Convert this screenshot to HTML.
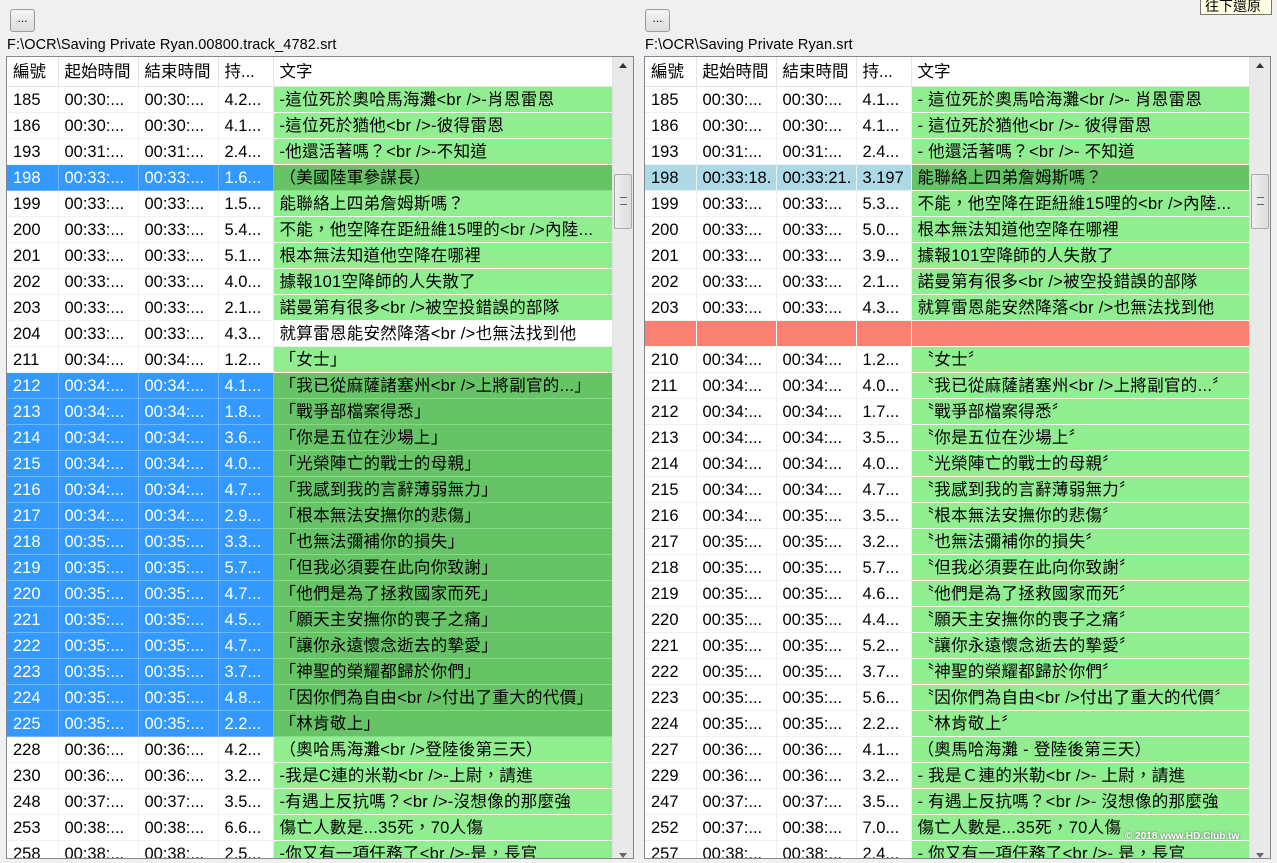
<!DOCTYPE html>
<html><head><meta charset="utf-8"><style>
*{margin:0;padding:0;box-sizing:border-box}
body{width:1277px;height:863px;background:#f0f0f0;font-family:"Liberation Sans","Noto Sans CJK TC",sans-serif;overflow:hidden;position:relative;color:#000}
.btn{position:absolute;top:9px;width:25px;height:23px;border:1px solid #9a9a9a;border-radius:3px;background:linear-gradient(#f6f6f6,#dcdcdc);font-size:12px;text-align:center;line-height:17px}
.lbl{position:absolute;top:37px;font-size:14.5px;letter-spacing:0.1px}
.panel{position:absolute;top:56px;height:803px;border:1px solid #828790;background:#fff;overflow:hidden}
table{border-collapse:collapse;table-layout:fixed;font-size:16.5px;position:absolute;left:0;top:0}
td,th{height:26px;border-right:1px solid #f0f0f0;border-bottom:1px solid #f0f0f0;padding:2px 0 0 6px;white-space:nowrap;overflow:hidden;font-weight:normal;text-align:left;line-height:23px}
th{height:29px;background:#fff;border-right:1px solid #e5e5e5;border-bottom:1px solid #e5e5e5;padding-left:6px;padding-top:3px}
td.t{background:#90ee90;border-right:1px solid #fff;border-bottom:1px solid #fff;letter-spacing:0.3px}
tr.s td{background:#3399ff;color:#fff;border-color:#6fb6ff}
tr.s td.t{background:#66c466;color:#000;border-color:#8ad88a}
tr.lb td{background:#add8e6}
tr.lb td.t{background:#66c466}
tr.w td.t{background:#fff;border-color:#f0f0f0}
tr.r td{background:#fa8072;border-color:#fff}
.sb{position:absolute;right:0;top:0;width:21px;height:100%;background:#e9e9e9;border-left:1px solid #e0e0e0}
.sb .up{position:absolute;top:6px;left:6px;width:0;height:0;border-left:4px solid transparent;border-right:4px solid transparent;border-bottom:5px solid #333}
.sb .dn{position:absolute;bottom:0;left:6px;width:0;height:0;border-left:4px solid transparent;border-right:4px solid transparent;border-top:5px solid #666}
.sb .th{position:absolute;top:117px;left:1px;width:18px;height:55px;border:1px solid #aaa;border-radius:2px;background:linear-gradient(90deg,#eee,#ddd)}
.sb .th:after{content:"";position:absolute;left:5px;top:22px;width:7px;height:6px;border-top:1px solid #666;border-bottom:1px solid #666}
.tip{position:absolute;left:1200px;top:-2px;width:72px;height:17px;background:#ffffe1;border:1px solid #767676;font-size:14px;line-height:14px;padding-left:4px}
.wm{position:absolute;left:1125px;top:831px;font-size:10px;color:#fff;text-shadow:0 0 2px #555;font-weight:bold}
</style></head><body>
<div class="btn" style="left:10px">...</div>
<div class="btn" style="left:645px">...</div>
<div class="lbl" style="left:7px">F:\OCR\Saving Private Ryan.00800.track_4782.srt</div>
<div class="lbl" style="left:645px">F:\OCR\Saving Private Ryan.srt</div>
<div class="tip">往下還原</div>

<div class="panel" style="left:6px;width:628px">
<table style="width:605px">
<colgroup><col style="width:51px"><col style="width:80px"><col style="width:80px"><col style="width:55px"><col style="width:339px"></colgroup>
<tr><th>編號</th><th>起始時間</th><th>結束時間</th><th>持...</th><th>文字</th></tr>
<tr><td>185</td><td>00:30:...</td><td>00:30:...</td><td>4.2...</td><td class="t">-這位死於奧哈馬海灘&lt;br /&gt;-肖恩雷恩</td></tr>
<tr><td>186</td><td>00:30:...</td><td>00:30:...</td><td>4.1...</td><td class="t">-這位死於猶他&lt;br /&gt;-彼得雷恩</td></tr>
<tr><td>193</td><td>00:31:...</td><td>00:31:...</td><td>2.4...</td><td class="t">-他還活著嗎？&lt;br /&gt;-不知道</td></tr>
<tr class="s"><td>198</td><td>00:33:...</td><td>00:33:...</td><td>1.6...</td><td class="t">（美國陸軍參謀長）</td></tr>
<tr><td>199</td><td>00:33:...</td><td>00:33:...</td><td>1.5...</td><td class="t">能聯絡上四弟詹姆斯嗎？</td></tr>
<tr><td>200</td><td>00:33:...</td><td>00:33:...</td><td>5.4...</td><td class="t">不能，他空降在距紐維15哩的&lt;br /&gt;內陸...</td></tr>
<tr><td>201</td><td>00:33:...</td><td>00:33:...</td><td>5.1...</td><td class="t">根本無法知道他空降在哪裡</td></tr>
<tr><td>202</td><td>00:33:...</td><td>00:33:...</td><td>4.0...</td><td class="t">據報101空降師的人失散了</td></tr>
<tr><td>203</td><td>00:33:...</td><td>00:33:...</td><td>2.1...</td><td class="t">諾曼第有很多&lt;br /&gt;被空投錯誤的部隊</td></tr>
<tr class="w"><td>204</td><td>00:33:...</td><td>00:33:...</td><td>4.3...</td><td class="t">就算雷恩能安然降落&lt;br /&gt;也無法找到他</td></tr>
<tr><td>211</td><td>00:34:...</td><td>00:34:...</td><td>1.2...</td><td class="t">「女士」</td></tr>
<tr class="s"><td>212</td><td>00:34:...</td><td>00:34:...</td><td>4.1...</td><td class="t">「我已從麻薩諸塞州&lt;br /&gt;上將副官的...」</td></tr>
<tr class="s"><td>213</td><td>00:34:...</td><td>00:34:...</td><td>1.8...</td><td class="t">「戰爭部檔案得悉」</td></tr>
<tr class="s"><td>214</td><td>00:34:...</td><td>00:34:...</td><td>3.6...</td><td class="t">「你是五位在沙場上」</td></tr>
<tr class="s"><td>215</td><td>00:34:...</td><td>00:34:...</td><td>4.0...</td><td class="t">「光榮陣亡的戰士的母親」</td></tr>
<tr class="s"><td>216</td><td>00:34:...</td><td>00:34:...</td><td>4.7...</td><td class="t">「我感到我的言辭薄弱無力」</td></tr>
<tr class="s"><td>217</td><td>00:34:...</td><td>00:34:...</td><td>2.9...</td><td class="t">「根本無法安撫你的悲傷」</td></tr>
<tr class="s"><td>218</td><td>00:35:...</td><td>00:35:...</td><td>3.3...</td><td class="t">「也無法彌補你的損失」</td></tr>
<tr class="s"><td>219</td><td>00:35:...</td><td>00:35:...</td><td>5.7...</td><td class="t">「但我必須要在此向你致謝」</td></tr>
<tr class="s"><td>220</td><td>00:35:...</td><td>00:35:...</td><td>4.7...</td><td class="t">「他們是為了拯救國家而死」</td></tr>
<tr class="s"><td>221</td><td>00:35:...</td><td>00:35:...</td><td>4.5...</td><td class="t">「願天主安撫你的喪子之痛」</td></tr>
<tr class="s"><td>222</td><td>00:35:...</td><td>00:35:...</td><td>4.7...</td><td class="t">「讓你永遠懷念逝去的摯愛」</td></tr>
<tr class="s"><td>223</td><td>00:35:...</td><td>00:35:...</td><td>3.7...</td><td class="t">「神聖的榮耀都歸於你們」</td></tr>
<tr class="s"><td>224</td><td>00:35:...</td><td>00:35:...</td><td>4.8...</td><td class="t">「因你們為自由&lt;br /&gt;付出了重大的代價」</td></tr>
<tr class="s"><td>225</td><td>00:35:...</td><td>00:35:...</td><td>2.2...</td><td class="t">「林肯敬上」</td></tr>
<tr><td>228</td><td>00:36:...</td><td>00:36:...</td><td>4.2...</td><td class="t">（奧哈馬海灘&lt;br /&gt;登陸後第三天）</td></tr>
<tr><td>230</td><td>00:36:...</td><td>00:36:...</td><td>3.2...</td><td class="t">-我是C連的米勒&lt;br /&gt;-上尉，請進</td></tr>
<tr><td>248</td><td>00:37:...</td><td>00:37:...</td><td>3.5...</td><td class="t">-有遇上反抗嗎？&lt;br /&gt;-沒想像的那麼強</td></tr>
<tr><td>253</td><td>00:38:...</td><td>00:38:...</td><td>6.6...</td><td class="t">傷亡人數是...35死，70人傷</td></tr>
<tr><td>258</td><td>00:38:...</td><td>00:38:...</td><td>2.5...</td><td class="t">-你又有一項任務了&lt;br /&gt;-是，長官</td></tr>
</table>
<div class="sb"><div class="up"></div><div class="th"></div><div class="dn"></div></div>
</div>

<div class="panel" style="left:644px;width:627px">
<table style="width:605px">
<colgroup><col style="width:51px"><col style="width:80px"><col style="width:80px"><col style="width:55px"><col style="width:339px"></colgroup>
<tr><th>編號</th><th>起始時間</th><th>結束時間</th><th>持...</th><th>文字</th></tr>
<tr><td>185</td><td>00:30:...</td><td>00:30:...</td><td>4.1...</td><td class="t">- 這位死於奧馬哈海灘&lt;br /&gt;- 肖恩雷恩</td></tr>
<tr><td>186</td><td>00:30:...</td><td>00:30:...</td><td>4.1...</td><td class="t">- 這位死於猶他&lt;br /&gt;- 彼得雷恩</td></tr>
<tr><td>193</td><td>00:31:...</td><td>00:31:...</td><td>2.4...</td><td class="t">- 他還活著嗎？&lt;br /&gt;- 不知道</td></tr>
<tr class="lb"><td>198</td><td>00:33:18.</td><td>00:33:21.</td><td>3.197</td><td class="t">能聯絡上四弟詹姆斯嗎？</td></tr>
<tr><td>199</td><td>00:33:...</td><td>00:33:...</td><td>5.3...</td><td class="t">不能，他空降在距紐維15哩的&lt;br /&gt;內陸...</td></tr>
<tr><td>200</td><td>00:33:...</td><td>00:33:...</td><td>5.0...</td><td class="t">根本無法知道他空降在哪裡</td></tr>
<tr><td>201</td><td>00:33:...</td><td>00:33:...</td><td>3.9...</td><td class="t">據報101空降師的人失散了</td></tr>
<tr><td>202</td><td>00:33:...</td><td>00:33:...</td><td>2.1...</td><td class="t">諾曼第有很多&lt;br /&gt;被空投錯誤的部隊</td></tr>
<tr><td>203</td><td>00:33:...</td><td>00:33:...</td><td>4.3...</td><td class="t">就算雷恩能安然降落&lt;br /&gt;也無法找到他</td></tr>
<tr class="r"><td></td><td></td><td></td><td></td><td class="t" style="background:#fa8072"></td></tr>
<tr><td>210</td><td>00:34:...</td><td>00:34:...</td><td>1.2...</td><td class="t">〝女士〞</td></tr>
<tr><td>211</td><td>00:34:...</td><td>00:34:...</td><td>4.0...</td><td class="t">〝我已從麻薩諸塞州&lt;br /&gt;上將副官的...〞</td></tr>
<tr><td>212</td><td>00:34:...</td><td>00:34:...</td><td>1.7...</td><td class="t">〝戰爭部檔案得悉〞</td></tr>
<tr><td>213</td><td>00:34:...</td><td>00:34:...</td><td>3.5...</td><td class="t">〝你是五位在沙場上〞</td></tr>
<tr><td>214</td><td>00:34:...</td><td>00:34:...</td><td>4.0...</td><td class="t">〝光榮陣亡的戰士的母親〞</td></tr>
<tr><td>215</td><td>00:34:...</td><td>00:34:...</td><td>4.7...</td><td class="t">〝我感到我的言辭薄弱無力〞</td></tr>
<tr><td>216</td><td>00:34:...</td><td>00:35:...</td><td>3.5...</td><td class="t">〝根本無法安撫你的悲傷〞</td></tr>
<tr><td>217</td><td>00:35:...</td><td>00:35:...</td><td>3.2...</td><td class="t">〝也無法彌補你的損失〞</td></tr>
<tr><td>218</td><td>00:35:...</td><td>00:35:...</td><td>5.7...</td><td class="t">〝但我必須要在此向你致謝〞</td></tr>
<tr><td>219</td><td>00:35:...</td><td>00:35:...</td><td>4.6...</td><td class="t">〝他們是為了拯救國家而死〞</td></tr>
<tr><td>220</td><td>00:35:...</td><td>00:35:...</td><td>4.4...</td><td class="t">〝願天主安撫你的喪子之痛〞</td></tr>
<tr><td>221</td><td>00:35:...</td><td>00:35:...</td><td>5.2...</td><td class="t">〝讓你永遠懷念逝去的摯愛〞</td></tr>
<tr><td>222</td><td>00:35:...</td><td>00:35:...</td><td>3.7...</td><td class="t">〝神聖的榮耀都歸於你們〞</td></tr>
<tr><td>223</td><td>00:35:...</td><td>00:35:...</td><td>5.6...</td><td class="t">〝因你們為自由&lt;br /&gt;付出了重大的代價〞</td></tr>
<tr><td>224</td><td>00:35:...</td><td>00:35:...</td><td>2.2...</td><td class="t">〝林肯敬上〞</td></tr>
<tr><td>227</td><td>00:36:...</td><td>00:36:...</td><td>4.1...</td><td class="t">（奧馬哈海灘 - 登陸後第三天）</td></tr>
<tr><td>229</td><td>00:36:...</td><td>00:36:...</td><td>3.2...</td><td class="t">- 我是Ｃ連的米勒&lt;br /&gt;- 上尉，請進</td></tr>
<tr><td>247</td><td>00:37:...</td><td>00:37:...</td><td>3.5...</td><td class="t">- 有遇上反抗嗎？&lt;br /&gt;- 沒想像的那麼強</td></tr>
<tr><td>252</td><td>00:37:...</td><td>00:38:...</td><td>7.0...</td><td class="t">傷亡人數是...35死，70人傷</td></tr>
<tr><td>257</td><td>00:38:...</td><td>00:38:...</td><td>2.4...</td><td class="t">- 你又有一項任務了&lt;br /&gt;- 是，長官</td></tr>
</table>
<div class="sb"><div class="up"></div><div class="th"></div><div class="dn"></div></div>
</div>
<div class="wm">© 2018 www.HD.Club.tw</div>
</body></html>
